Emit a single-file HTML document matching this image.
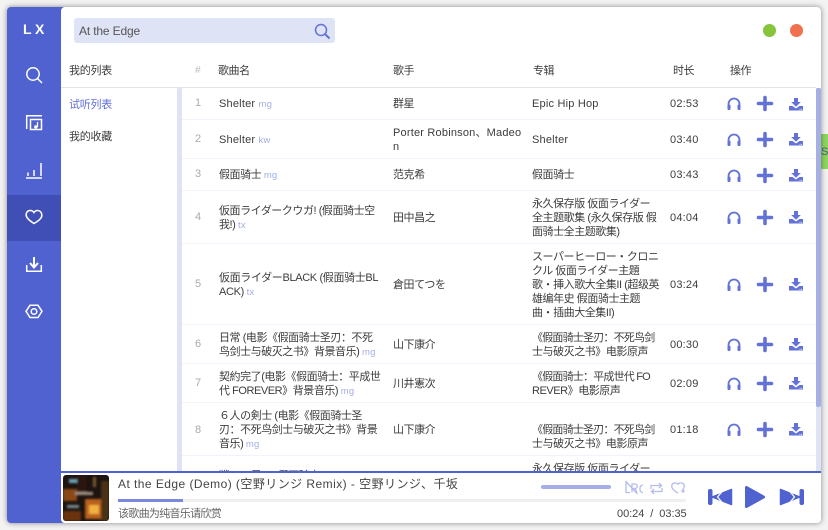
<!DOCTYPE html>
<html><head><meta charset="utf-8"><style>
html,body{margin:0;padding:0;width:828px;height:530px;overflow:hidden;background:#f3f3f3}
*{box-sizing:border-box}
body{font-family:"Liberation Sans","Noto Sans CJK SC",sans-serif;font-size:11px;color:#3c3c3c;position:relative}
.a{position:absolute}
.t{position:absolute;line-height:14px;letter-spacing:-.45px;white-space:nowrap;margin-top:1px}
.l{letter-spacing:.2px}
.p{letter-spacing:-.8px}
.ln{position:absolute;left:182px;width:634px;height:1px;background:#f1f2fa}
.s{color:#a3ade8;font-size:9.5px;letter-spacing:.2px}
.n{position:absolute;left:190px;width:16px;text-align:center;color:#aaa;font-size:11px;line-height:14px;margin-top:1px}
</style></head><body>
<div class="a" style="left:821px;top:134px;width:7px;height:35px;background:#8fd65f;overflow:hidden;color:#4b5a8f;font-size:11px;line-height:37px;white-space:nowrap">S2</div>
<div class="a" id="win" style="left:7px;top:7px;width:814px;height:516px;background:#4f62d0;border-radius:4px;box-shadow:0 0 6px rgba(0,0,0,.45);overflow:hidden">
<div class="a" style="left:54px;top:0;width:760px;height:516px;background:#fff;border-radius:4px 0 0 4px"></div>
<div class="a" style="left:0;top:188px;width:54px;height:46px;background:#3f4fb5"></div>
</div>
<div class="a" style="left:23px;top:21px;color:#fff;font-weight:bold;font-size:14px;line-height:16px;letter-spacing:3.5px">LX</div>
<svg class="a" style="left:0;top:0" width="61" height="330" fill="none" stroke="#fff" stroke-width="1.5">
<circle cx="33" cy="74" r="6.2"/><path d="M37.500 78.500L42 83"/>
<path d="M26.700 129V115.700H42M30.500 119.500h11v10h-11z"/><path d="M37.500 122v5" stroke-width="1.300"/><circle cx="35.800" cy="127" r="1.700" fill="#fff" stroke="none"/>
<path d="M26 178h16M28 176v-3.500M34 176v-6M41 176v-13"/>
<path d="M34 223.500c-8-5-8.500-8-7.500-10.500C27.500 210 32 209.500 34 212.500c2-3 6.500-2.500 7.500 1 1 2.500.5 5.500-7.500 10z"/>
<path d="M34 257v10" stroke-width="2"/><path d="M30 263l4 4.500 4-4.500" stroke-width="2"/><path d="M26.700 265v6.300h14.600V265"/>
<path d="M30 305.300h8l4 6-4 6.200h-8l-4-6.200z"/><circle cx="34" cy="311.500" r="2.800"/>
</svg>

<div class="a" style="left:74px;top:18px;width:261px;height:25px;background:#dfe3f6;border-radius:3px"></div>
<div class="t" style="left:79px;top:24px;font-size:12px;color:#555;letter-spacing:-.15px;margin-top:0">At the Edge</div>
<svg class="a" style="left:313px;top:22px" width="18" height="18" fill="none" stroke="#6272d6" stroke-width="1.500"><circle cx="8" cy="8" r="5.500"/><path d="M12 12l4.500 4.500" stroke-width="2"/></svg>
<div class="a" style="left:763px;top:24px;width:13px;height:13px;border-radius:50%;background:#85c43b"></div>
<div class="a" style="left:790px;top:24px;width:13px;height:13px;border-radius:50%;background:#f07050"></div>

<div class="t" style="left:69px;top:63px;letter-spacing:-.25px">我的列表</div>
<div class="t" style="left:195px;top:63px;color:#bbb;font-size:10px">#</div>
<div class="t" style="left:218px;top:63px">歌曲名</div>
<div class="t" style="left:393px;top:63px">歌手</div>
<div class="t" style="left:533px;top:63px">专辑</div>
<div class="t" style="left:673px;top:63px">时长</div>
<div class="t" style="left:730px;top:63px">操作</div>
<div class="a" style="left:61px;top:87px;width:755px;height:1px;background:#e4e4e4"></div>

<div class="t" style="left:69px;top:97px;color:#5d6fd8;letter-spacing:-.25px">试听列表</div>
<div class="t" style="left:69px;top:129px;letter-spacing:-.25px">我的收藏</div>
<div class="a" style="left:177px;top:88px;width:5px;height:383px;background:#dfe3f6;border-radius:2px 0 0 0"></div>

<div class="ln" style="top:119px"></div><div class="ln" style="top:158px"></div><div class="ln" style="top:190px"></div><div class="ln" style="top:243px"></div><div class="ln" style="top:324px"></div><div class="ln" style="top:363px"></div><div class="ln" style="top:402px"></div><div class="ln" style="top:455px"></div>

<div class="n" style="top:95px">1</div><div class="t l" style="left:219px;top:96px">Shelter <span class="s">mg</span></div><div class="t" style="left:393px;top:96px">群星</div><div class="t l" style="left:532px;top:96px">Epic Hip Hop</div><div class="t l" style="left:670px;top:96px">02:53</div>
<div class="n" style="top:131px">2</div><div class="t l" style="left:219px;top:132px">Shelter <span class="s">kw</span></div><div class="t l" style="left:393px;top:125px">Porter Robinson、Madeo<br>n</div><div class="t l" style="left:532px;top:132px">Shelter</div><div class="t l" style="left:670px;top:132px">03:40</div>
<div class="n" style="top:166px">3</div><div class="t" style="left:219px;top:167px">假面骑士 <span class="s">mg</span></div><div class="t" style="left:393px;top:167px">范克希</div><div class="t" style="left:532px;top:167px">假面骑士</div><div class="t l" style="left:670px;top:167px">03:43</div>
<div class="n" style="top:209px">4</div><div class="t" style="left:219px;top:203px">仮面ライダークウガ! (假面骑士空<br>我!) <span class="s">tx</span></div><div class="t" style="left:393px;top:210px">田中昌之</div><div class="t" style="left:532px;top:196px">永久保存版 仮面ライダー<br>全主题歌集 (永久保存版 假<br>面骑士全主题歌集)</div><div class="t l" style="left:670px;top:210px">04:04</div>
<div class="n" style="top:276px">5</div><div class="t" style="left:219px;top:270px;letter-spacing:-.35px">仮面ライダーBLACK (假面骑士BL<br>ACK) <span class="s">tx</span></div><div class="t" style="left:393px;top:277px">倉田てつを</div><div class="t" style="left:532px;top:249px">スーパーヒーロー・クロニ<br>クル 仮面ライダー主題<br>歌・挿入歌大全集II (超级英<br>雄编年史 假面骑士主题<br>曲・插曲大全集II)</div><div class="t l" style="left:670px;top:277px">03:24</div>
<div class="n" style="top:336px">6</div><div class="t" style="left:219px;top:330px">日常 (电影《假面骑士圣刃：不死<br>鸟剑士与破灭之书》背景音乐) <span class="s">mg</span></div><div class="t" style="left:393px;top:337px">山下康介</div><div class="t" style="left:532px;top:330px"><span class="p">《假面骑士圣刃：不死鸟剑</span><br>士与破灭之书》电影原声</div><div class="t l" style="left:670px;top:337px">00:30</div>
<div class="n" style="top:375px">7</div><div class="t" style="left:219px;top:369px">契約完了(电影《假面骑士：平成世<br>代 FOREVER》背景音乐) <span class="s">mg</span></div><div class="t" style="left:393px;top:376px">川井憲次</div><div class="t" style="left:532px;top:369px"><span class="p">《假面骑士：平成世代 FO</span><br>REVER》电影原声</div><div class="t l" style="left:670px;top:376px">02:09</div>
<div class="n" style="top:422px">8</div><div class="t" style="left:219px;top:408px"> ６人の剣士 (电影《假面骑士圣<br>刃：不死鸟剑士与破灭之书》背景<br>音乐) <span class="s">mg</span></div><div class="t" style="left:393px;top:422px">山下康介</div><div class="t" style="left:532px;top:422px"><span class="p">《假面骑士圣刃：不死鸟剑</span><br>士与破灭之书》电影原声</div><div class="t l" style="left:670px;top:422px">01:18</div>
<div class="t" style="left:532px;top:461px">永久保存版 仮面ライダー</div>
<div class="t" style="left:219px;top:468px">戦いの果て (假面骑士</div>

<svg width="0" height="0" style="position:absolute"><defs>
<g id="h"><path d="M2.500 11V8a5.500 5.500 0 0 1 11 0v3" fill="none" stroke="#6272d6" stroke-width="1.800"/><rect x="1.500" y="8.500" width="3" height="5.500" rx="1" fill="#6272d6"/><rect x="11.500" y="8.500" width="3" height="5.500" rx="1" fill="#6272d6"/></g>
<g id="p"><path d="M8 1.500v12M1.500 7.500h13" fill="none" stroke="#6272d6" stroke-width="3.600" stroke-linecap="round"/></g>
<g id="d"><path d="M6 1h4v4h2.800L8 9.800 3.200 5H6zM1 9h3.500L8 11.500 11.500 9H15v4.500H1z" fill="#6272d6"/><path d="M11.500 12.300h.9M13 12.300h.9" stroke="#fff" stroke-width=".9"/></g>
</defs></svg>
<svg class="a" style="left:0;top:0" width="828" height="470">
<use href="#h" x="726" y="96"/><use href="#p" x="757" y="96"/><use href="#d" x="788" y="97"/>
<use href="#h" x="726" y="132"/><use href="#p" x="757" y="132"/><use href="#d" x="788" y="132"/>
<use href="#h" x="726" y="168"/><use href="#p" x="757" y="168"/><use href="#d" x="788" y="168"/>
<use href="#h" x="726" y="210"/><use href="#p" x="757" y="210"/><use href="#d" x="788" y="210"/>
<use href="#h" x="726" y="277"/><use href="#p" x="757" y="277"/><use href="#d" x="788" y="277"/>
<use href="#h" x="726" y="337"/><use href="#p" x="757" y="337"/><use href="#d" x="788" y="337"/>
<use href="#h" x="726" y="376"/><use href="#p" x="757" y="376"/><use href="#d" x="788" y="376"/>
<use href="#h" x="726" y="422"/><use href="#p" x="757" y="422"/><use href="#d" x="788" y="422"/>
</svg>

<div class="a" style="left:816px;top:88px;width:5px;height:383px;background:#dfe3f6"></div>
<div class="a" style="left:816px;top:88px;width:5px;height:319px;background:#a5aee5;border-radius:2px"></div>

<div class="a" style="left:61px;top:471px;width:760px;height:52px;background:#fff;border-top:2px solid #4f62d0;border-radius:0 0 4px 4px"></div>
<svg class="a" style="left:63px;top:475px;border-radius:3px" width="46" height="46">
<defs><filter id="b" x="0" y="0" width="100%" height="100%"><feGaussianBlur stdDeviation="1"/></filter></defs>
<rect width="46" height="46" fill="#1c1410"/><g filter="url(#b)"><rect x="0" y="14" width="14" height="12" fill="#8a4a12"/><rect x="14" y="0" width="10" height="20" fill="#2a1810"/><rect x="22" y="24" width="16" height="20" fill="#b8601a"/><rect x="26" y="30" width="10" height="9" fill="#f2b040"/><rect x="38" y="6" width="8" height="40" fill="#4a3018"/><rect x="6" y="4" width="8" height="4" fill="#6fa5b8"/><rect x="12" y="17" width="18" height="3" fill="#a09080"/><rect x="0" y="36" width="18" height="10" fill="#6a3010"/><rect x="4" y="30" width="12" height="3" fill="#7a8a90"/><rect x="30" y="2" width="3" height="10" fill="#7a5a30"/></g>
</svg>
<div class="t" style="left:118px;top:477px;font-size:12px;letter-spacing:.45px;color:#444;margin-top:0">At the Edge (Demo) (空野リンジ Remix) - 空野リンジ、千坂</div>
<div class="a" style="left:118px;top:499px;width:568px;height:3px;background:#efefef"></div>
<div class="a" style="left:118px;top:499px;width:65px;height:3px;background:#7a89dd"></div>
<div class="t" style="left:118px;top:507px;color:#666;letter-spacing:-.7px;margin-top:0">该歌曲为纯音乐请欣赏</div>
<div class="t" style="left:617px;top:507px;color:#444;letter-spacing:-.05px;margin-top:0">00:24 &nbsp;/&nbsp; 03:35</div>
<div class="a" style="left:541px;top:485px;width:70px;height:4px;border-radius:2px;background:#a5aee5"></div>
<svg class="a" style="left:624px;top:480px" width="64" height="16" fill="none" stroke="#b4bcec" stroke-width="1.300">
<path d="M2 2.500v10h4M8 12.500V4h3a2 2 0 0 1 0 4.500H8M11 8.500l2 4M19 5a3 3 0 0 0-3 3v2a3 3 0 0 0 3 2.500M1.500 1l12 13"/>
<path d="M27 9V5.500h10M35 3l2.500 2.500L35 8M38 8v3.500H28M30 14l-2.500-2.500L30 9"/>
<path d="M54 13c-6-3.500-7-6-6-8.300 1-2.300 4.500-2.500 6-.4 1.500-2.100 5-1.900 6 .4.700 1.500.3 3.200-1.500 5M57 11h4M59 9v4"/>
</svg>
<svg class="a" style="left:705px;top:484px" width="102" height="28" fill="#4f62d0" stroke="#4f62d0" stroke-linejoin="round">
<rect x="3.500" y="5.500" width="3.500" height="15" rx="1.500"/>
<path d="M26.500 5.500v15L7.500 13z" stroke-width="1.500"/><path d="M18 6.500L12.500 13l5.500 6.500" fill="none" stroke="#fff" stroke-width="1.300"/>
<path d="M41.500 3.500v19L58.500 13z" stroke-width="3"/>
<rect x="95" y="5.500" width="3.500" height="15" rx="1.500"/>
<path d="M75.500 5.500v15L94.500 13z" stroke-width="1.500"/><path d="M84 6.500L89.500 13 84 19.500" fill="none" stroke="#fff" stroke-width="1.300"/>
</svg>
</body></html>
